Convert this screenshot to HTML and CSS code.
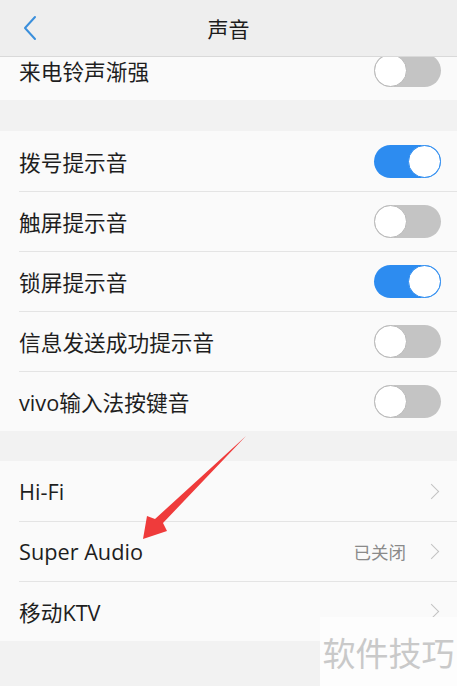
FILE: index.html
```html
<!DOCTYPE html>
<html lang="zh-CN">
<head>
  <meta charset="UTF-8" />
  <meta name="viewport" content="width=device-width, initial-scale=1.0"/>
  <title>声音</title>
  <link rel="stylesheet" href="styles.css">
</head>
<body>

  <header class="topbar">
    <a class="back" href="#">
      <svg width="14" height="26" viewBox="0 0 14 26"><path d="M12 2 L2 13 L12 24" fill="none" stroke="#3a8fdc" stroke-width="2" stroke-linecap="round" stroke-linejoin="round"/></svg>
    </a>
    <h1>声音</h1>
  </header>

  <main class="scroller">
    <div class="group first">
      <div class="row">
        <span class="label">来电铃声渐强</span>
        <span class="switch"></span>
      </div>
    </div>

    <div class="group">
      <div class="row">
        <span class="label">拨号提示音</span>
        <span class="switch on"></span>
      </div>
      <div class="row">
        <span class="label">触屏提示音</span>
        <span class="switch"></span>
      </div>
      <div class="row">
        <span class="label">锁屏提示音</span>
        <span class="switch on"></span>
      </div>
      <div class="row">
        <span class="label">信息发送成功提示音</span>
        <span class="switch"></span>
      </div>
      <div class="row">
        <span class="label">vivo输入法按键音</span>
        <span class="switch"></span>
      </div>
    </div>

    <div class="group">
      <div class="row">
        <span class="label">Hi-Fi</span>
        <span class="more"><i class="chev"></i></span>
      </div>
      <div class="row">
        <span class="label">Super Audio</span>
        <span class="more"><span class="value">已关闭</span><i class="chev"></i></span>
      </div>
      <div class="row">
        <span class="label">移动KTV</span>
        <span class="more"><i class="chev"></i></span>
      </div>
    </div>
  </main>

  <!-- annotation arrow -->
  <svg class="arrow" width="457" height="686" viewBox="0 0 457 686">
    <path d="M246 436 L163 523 L167 531 L143 539 L147 516 L155 519 Z" fill="#ef3b3b"/>
  </svg>

  <div class="watermark">软件技巧</div>

</body>
</html>
```

FILE: styles.css
```css
* {
  margin: 0;
  padding: 0;
  box-sizing: border-box;
}

body {
  font-family: "Open Sans", "Noto Sans CJK SC", sans-serif;
  background: #f2f2f2;
  color: #222;
  width: 457px;
  height: 686px;
  overflow: hidden;
  position: relative;
}

.topbar {
  height: 57px;
  background: #eeeeee;
  border-bottom: 1px solid #d9d9d9;
  display: flex;
  align-items: center;
  justify-content: center;
  position: relative;
  z-index: 2;
}

.topbar h1 {
  font-family: "Noto Sans CJK SC", sans-serif;
  font-size: 21px;
  font-weight: normal;
  color: #1c1c1c;
}

.back {
  position: absolute;
  left: 23px;
  top: 15px;
  display: flex;
}

.scroller {
  height: 629px;
  overflow: hidden;
}

.group {
  background: #fafafa;
  margin-bottom: 30px;
}

.group.first {
  margin-top: -17px;
  margin-bottom: 31px;
}

.row {
  height: 60px;
  display: flex;
  align-items: center;
  justify-content: space-between;
  padding: 0 16px 0 19px;
  position: relative;
}

.row + .row::before {
  content: "";
  position: absolute;
  left: 19px;
  right: 0;
  top: 0;
  border-top: 1px solid #e4e4e4;
}

.label {
  font-size: 21.7px;
  color: #1e1e1e;
}

.switch {
  width: 67px;
  height: 33px;
  border-radius: 17px;
  background: #c4c4c4;
  position: relative;
}

.switch::after {
  content: "";
  position: absolute;
  left: 0;
  top: 0;
  width: 33px;
  height: 33px;
  border-radius: 50%;
  background: #fff;
  border: 1px solid #b8b8b8;
  box-sizing: border-box;
}

.switch.on {
  background: #2d8cf0;
}

.switch.on::after {
  left: 34px;
  border-color: #2d8cf0;
}

.more {
  display: flex;
  align-items: center;
  gap: 20px;
}

.value {
  font-family: "Noto Sans CJK SC", sans-serif;
  font-size: 17.5px;
  color: #8a8a8a;
}

.chev {
  width: 11px;
  height: 11px;
  border-top: 1.5px solid #c2c2c2;
  border-right: 1.5px solid #c2c2c2;
  transform: rotate(45deg);
  margin-right: 4px;
}

.arrow {
  position: absolute;
  left: 0;
  top: 0;
  pointer-events: none;
}

.watermark {
  position: absolute;
  left: 320px;
  top: 617px;
  width: 137px;
  height: 69px;
  background: #fdfdfd;
  color: #c9c9c9;
  font-family: "Noto Sans CJK SC", sans-serif;
  font-size: 33px;
  display: flex;
  align-items: center;
  justify-content: center;
}
```
